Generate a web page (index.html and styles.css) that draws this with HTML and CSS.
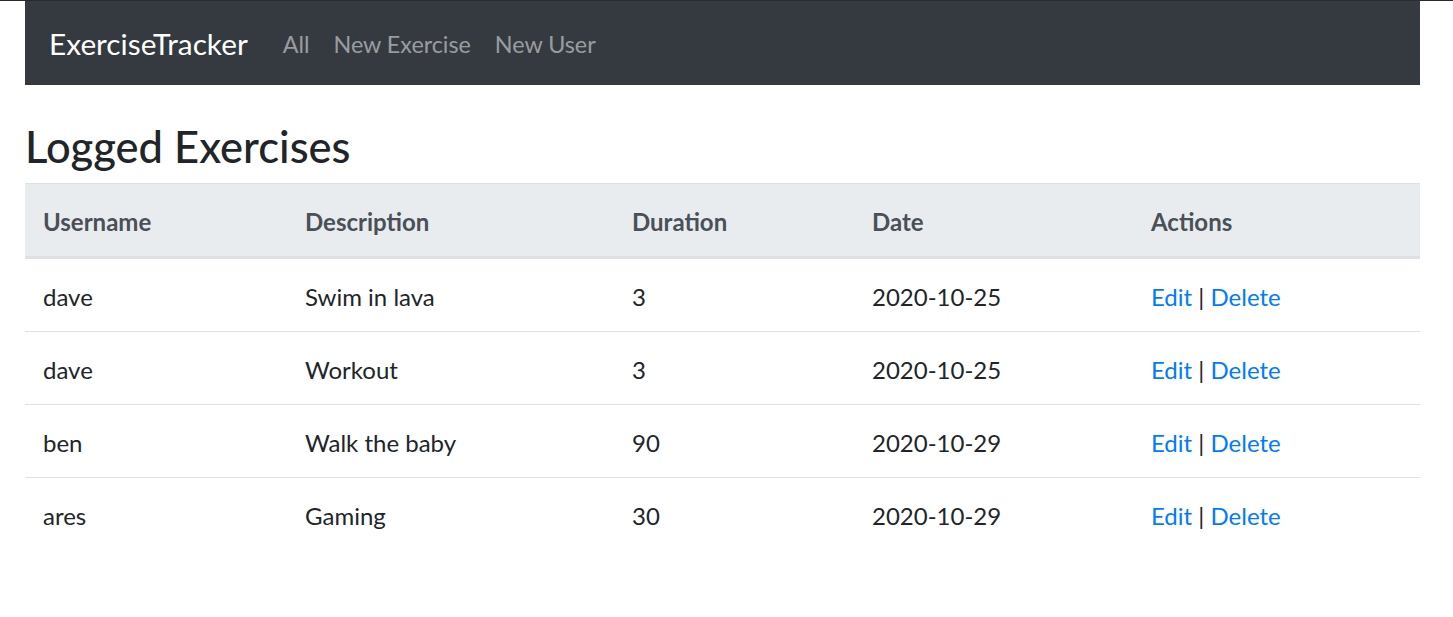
FILE: index.html
```html
<!DOCTYPE html>
<html lang="en">
<head>
<meta charset="utf-8">
<title>ExerciseTracker</title>
<link rel="stylesheet" href="styles.css">
</head>
<body>
<div class="container">
  <nav class="navbar">
    <a class="brand" href="#">ExerciseTracker</a>
    <ul class="nav">
      <li><a class="nav-link" href="#">All</a></li>
      <li><a class="nav-link" href="#">New Exercise</a></li>
      <li><a class="nav-link" href="#">New User</a></li>
    </ul>
  </nav>
  <div class="spacer"></div>
  <h3 class="title">Logged Exercises</h3>
  <table class="table">
    <colgroup>
      <col class="c1"><col class="c2"><col class="c3"><col class="c4"><col class="c5">
    </colgroup>
    <thead>
      <tr><th>Username</th><th>Description</th><th>Duration</th><th>Date</th><th>Actions</th></tr>
    </thead>
    <tbody>
      <tr><td>dave</td><td>Swim in lava</td><td>3</td><td>2020-10-25</td><td><a href="#">Edit</a> | <a href="#">Delete</a></td></tr>
      <tr><td>dave</td><td>Workout</td><td>3</td><td>2020-10-25</td><td><a href="#">Edit</a> | <a href="#">Delete</a></td></tr>
      <tr><td>ben</td><td>Walk the baby</td><td>90</td><td>2020-10-29</td><td><a href="#">Edit</a> | <a href="#">Delete</a></td></tr>
      <tr><td>ares</td><td>Gaming</td><td>30</td><td>2020-10-29</td><td><a href="#">Edit</a> | <a href="#">Delete</a></td></tr>
    </tbody>
  </table>
</div>
</body>
</html>
```
FILE: styles.css
```css
html, body {
  margin: 0;
  padding: 0;
  background: #fff;
}
body {
  border-top: 1px solid #2a2a2a;
  font-family: "Lato", "Noto Sans", sans-serif;
  font-size: 24px;
  line-height: 1.5;
  color: #212529;
}
.container {
  width: 1395px;
  margin-left: 25px;
}
.navbar {
  background: #343a40;
  height: 84px;
  padding: 2px 24px 0;
  display: flex;
  align-items: center;
  box-sizing: border-box;
}
.brand {
  color: #fff;
  font-size: 29.8px;
  text-decoration: none;
  margin-right: 23px;
  line-height: 1.5;
}
.nav {
  list-style: none;
  margin: 0;
  padding: 0;
  display: flex;
}
.nav-link {
  display: block;
  padding: 0 12px;
  font-size: 23.3px;
  color: rgba(255, 255, 255, 0.5);
  text-decoration: none;
}
.spacer {
  height: 36px;
}
.title {
  margin: 0 0 12px 0;
  font-size: 43.5px;
  font-weight: 500;
  line-height: 50px;
}
.table {
  width: 100%;
  border-collapse: collapse;
  table-layout: fixed;
}
.c1 { width: 262px; }
.c2 { width: 327px; }
.c3 { width: 240px; }
.c4 { width: 279px; }
.c5 { width: 287px; }
.table th, .table td {
  padding: 20px 18px 16px;
  text-align: left;
  vertical-align: top;
  border-top: 1px solid #dee2e6;
}
.table thead th {
  background: #e9ecef;
  color: #495057;
  font-weight: 700;
  border-bottom: 3px solid #dee2e6;
}
.table tbody tr:first-child td {
  border-top: 0;
}
.table a {
  color: #007bff;
  text-decoration: none;
}
```
